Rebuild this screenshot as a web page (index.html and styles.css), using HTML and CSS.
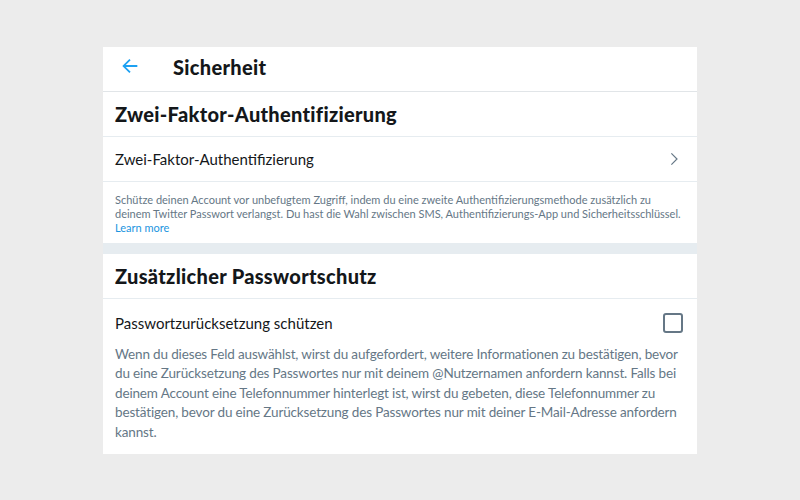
FILE: index.html
```html
<!DOCTYPE html>
<html lang="de">
<head>
<meta charset="utf-8">
<link rel="stylesheet" href="styles.css">
</head>
<body>
<main class="panel">
  <section class="card">
    <header class="topbar">
      <span class="back">
        <svg viewBox="0 0 24 24" width="22" height="22"><path d="M20 11H7.4l5.3-5.3-1.4-1.4L3.6 12l7.7 7.7 1.4-1.4L7.4 13H20z" fill="#1da1f2"/></svg>
      </span>
      <h1 class="title">Sicherheit</h1>
    </header>
    <h2 class="section-title">Zwei-Faktor-Authentifizierung</h2>
    <div class="row">
      <span class="row-label">Zwei-Faktor-Authentifizierung</span>
      <svg class="chev" viewBox="0 0 24 24" width="18" height="18"><path d="M8.5 4.5l7.5 7.5-7.5 7.5" fill="none" stroke="#657786" stroke-width="1.6"/></svg>
    </div>
    <p class="note small">Schütze deinen Account vor unbefugtem Zugriff, indem du eine zweite Authentifizierungsmethode zusätzlich zu deinem Twitter Passwort verlangst. Du hast die Wahl zwischen SMS, Authentifizierungs-App und Sicherheitsschlüssel. <a class="link" href="#">Learn more</a></p>
  </section>
  <div class="spacer"></div>
  <section class="card">
    <h2 class="section-title">Zusätzlicher Passwortschutz</h2>
    <div class="row check-row">
      <span class="row-label">Passwortzurücksetzung schützen</span>
      <span class="checkbox"></span>
    </div>
    <p class="note large">Wenn du dieses Feld auswählst, wirst du aufgefordert, weitere Informationen zu bestätigen, bevor du eine Zurücksetzung des Passwortes nur mit deinem @Nutzernamen anfordern kannst. Falls bei deinem Account eine Telefonnummer hinterlegt ist, wirst du gebeten, diese Telefonnummer zu bestätigen, bevor du eine Zurücksetzung des Passwortes nur mit deiner E-Mail-Adresse anfordern kannst.</p>
  </section>
</main>
</body>
</html>
```
FILE: styles.css
```css
* { box-sizing: border-box; }
html, body { margin: 0; padding: 0; }
body {
  background: #ececec;
  font-family: Lato, "Open Sans", sans-serif;
  color: #14171a;
  padding-top: 47px;
}
.panel {
  width: 594px;
  margin: 0 auto;
  display: flex;
  flex-direction: column;
}
.card { background: #fff; }
.spacer { height: 11px; background: #e6ecf0; }
.topbar {
  height: 45px;
  display: flex;
  align-items: center;
  padding-left: 16px;
  padding-bottom: 5px;
  border-bottom: 1px solid #e1e5e8;
}
.back { display: flex; width: 54px; margin-top: -1px; }
.title {
  margin: 0;
  font-size: 20px;
  font-weight: 900;
  letter-spacing: 0.3px;
}
.section-title {
  margin: 0;
  height: 45px;
  display: flex;
  align-items: center;
  padding: 0 12px;
  font-size: 20px;
  font-weight: 900;
  letter-spacing: 0.3px;
  border-bottom: 1px solid #e6ecf0;
}
.row {
  height: 45px;
  display: flex;
  align-items: center;
  justify-content: space-between;
  padding: 0 14px 0 12px;
  border-bottom: 1px solid #e6ecf0;
  font-size: 15px;
}
.check-row { border-bottom: none; height: 44px; padding-top: 4px; }
.checkbox {
  width: 20px; height: 20px;
  border: 2px solid #657786;
  border-radius: 3px;
}
.note { margin: 0; color: #657786; }
.small {
  font-size: 11px;
  line-height: 14px;
  padding: 11px 12px 8px;
}
.large {
  font-size: 13.5px;
  letter-spacing: -0.15px;
  line-height: 19.4px;
  padding: 2px 10px 12px 12px;
}
.link { color: #1b95e0; text-decoration: none; }
```
